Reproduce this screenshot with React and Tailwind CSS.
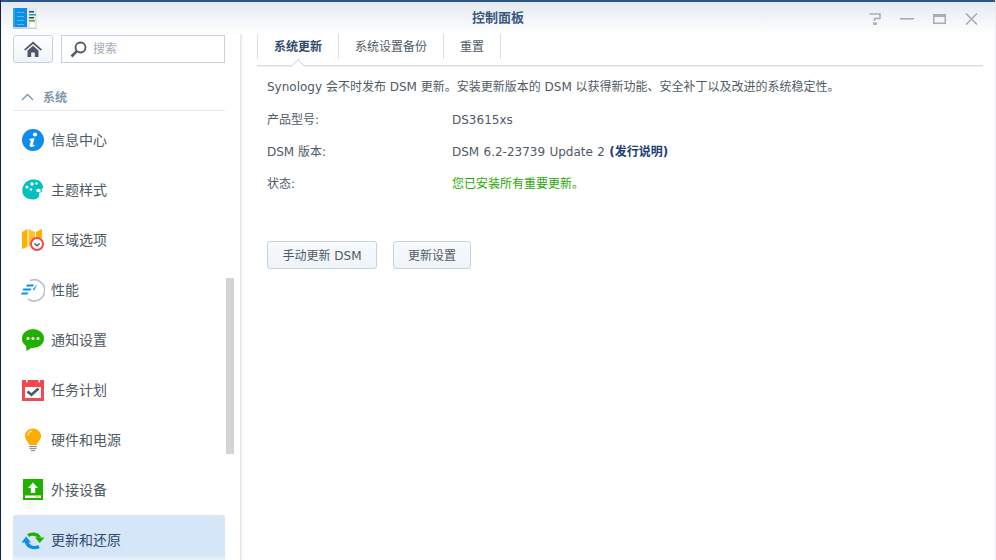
const font = { fontFamily: '"DejaVu Sans", "Noto Sans CJK SC", sans-serif' };

function InfoIcon() {
  return (
    <svg width="24" height="24" viewBox="0 0 24 24">
      <circle cx="12" cy="12" r="11" fill="#0b8de8" />
      <circle cx="14" cy="6.5" r="2.1" fill="#fff" />
      <path d="M8.5 11 L13.6 10 L11.6 17.4 L13.8 16.6 L13.5 18 Q10.5 19.4 9 18.6 Q8.3 18 8.8 16.4 L10 12.4 L8.4 12.2 Z" fill="#fff" />
    </svg>
  );
}

function ThemeIcon() {
  return (
    <svg width="24" height="24" viewBox="0 0 24 24">
      <path d="M11 1.5 C17 0.8 21 3.5 22 8 C22.6 10.5 20.8 11 19 11 C17 11 16.6 12.4 17.6 14 C18.8 16 18.6 19 16 20.4 C13 22 6 22 2.6 17.6 C-0.6 12 2.4 2.6 11 1.5 Z" fill="#00c0c0" />
      <ellipse cx="18" cy="12.5" rx="3" ry="2.2" fill="#00c0c0" />
      <ellipse cx="17.5" cy="12.5" rx="2.4" ry="1.7" fill="#fff" />
      <circle cx="11" cy="6" r="1.7" fill="#fff" />
      <circle cx="6" cy="9" r="1.6" fill="#fff" />
      <circle cx="15.5" cy="5.5" r="1.2" fill="#fff" />
      <circle cx="10" cy="11.5" r="1.2" fill="#fff" />
    </svg>
  );
}

function RegionIcon() {
  return (
    <svg width="24" height="24" viewBox="0 0 24 24">
      <path d="M1 4 L6.5 1 L6.5 19 L1 21 Z" fill="#ffb000" />
      <path d="M7.5 1 L14 4 L14 12 L7.5 19 Z" fill="#ffc233" />
      <path d="M15 4 L21 1 L21 10 L15 12 Z" fill="#ffb000" />
      <circle cx="16" cy="16" r="6" fill="#fff" stroke="#f2474d" strokeWidth="2" />
      <path d="M13.4 15.5 L16 17.8 L18.6 15.5" fill="none" stroke="#555e6b" strokeWidth="1.4" />
    </svg>
  );
}

function PerfIcon() {
  return (
    <svg width="24" height="24" viewBox="0 0 24 24">
      <path d="M9 2.6 A10.6 10.6 0 1 1 7 21" fill="none" stroke="#b9c2cd" strokeWidth="1.8" />
      <path d="M6 6.5 H13 L12 8.5 H5 Z M2.5 10.5 H10.5 L9.5 12.5 H1.5 Z M1 14.5 H7.5 L6.5 16.5 H0 Z" fill="#0b8de8" />
      <path d="M16.5 6 L13 12.5 L11.8 11.2 Z" fill="#0b8de8" />
    </svg>
  );
}

function NoticeIcon() {
  return (
    <svg width="24" height="24" viewBox="0 0 24 24">
      <ellipse cx="12" cy="10.5" rx="11" ry="9.5" fill="#20b100" />
      <path d="M5 17 L5.5 23 L12 19 Z" fill="#20b100" />
      <circle cx="7" cy="10.5" r="1.5" fill="#fff" />
      <circle cx="12" cy="10.5" r="1.5" fill="#fff" />
      <circle cx="17" cy="10.5" r="1.5" fill="#fff" />
    </svg>
  );
}

function TaskIcon() {
  return (
    <svg width="24" height="24" viewBox="0 0 24 24">
      <rect x="1" y="2" width="22" height="21" fill="#f5474f" />
      <rect x="4" y="9" width="16" height="11" fill="#fff" />
      <rect x="5" y="1" width="1.6" height="3.4" fill="#fff" />
      <rect x="17.4" y="1" width="1.6" height="3.4" fill="#fff" />
      <path d="M6.5 13.5 L10.5 16.8 L17.5 10.5" fill="none" stroke="#4f5867" strokeWidth="2.6" />
    </svg>
  );
}

function BulbIcon() {
  return (
    <svg width="24" height="24" viewBox="0 0 24 24">
      <path d="M12 0.5 C16.5 0.5 20 3.8 20 8 C20 12 16.6 13.5 15.8 17 H8.2 C7.4 13.5 4 12 4 8 C4 3.8 7.5 0.5 12 0.5 Z" fill="#ffac00" />
      <path d="M7 8 C7 5 9 3.2 11 3" fill="none" stroke="#ffd98a" strokeWidth="1.4" />
      <rect x="8" y="18" width="8" height="1.2" fill="#8d96a3" />
      <rect x="8.5" y="20" width="7" height="1.2" fill="#8d96a3" />
      <rect x="10" y="22" width="4" height="1.2" fill="#8d96a3" />
    </svg>
  );
}

function ExternalIcon() {
  return (
    <svg width="24" height="24" viewBox="0 0 24 24">
      <rect x="2" y="1" width="20" height="21" fill="#20b100" />
      <path d="M12 4.5 L17 10 H14.2 V15 H9.8 V10 H7 Z" fill="#fff" />
      <rect x="4" y="17.5" width="16" height="2.4" fill="#fff" />
      <rect x="15" y="18.2" width="2.5" height="1" fill="#ffac00" />
    </svg>
  );
}

function UpdateIcon() {
  return (
    <svg width="24" height="24" viewBox="0 0 24 24">
      <path d="M7 7.5 A8 7 0 0 1 18.6 9.5" fill="none" stroke="#20b100" strokeWidth="3.4" />
      <path d="M14 9.5 H23.5 L18.7 15 Z" fill="#20b100" />
      <path d="M5.5 13 C5.5 18 12 21.5 18 18.5" fill="none" stroke="#0b8de8" strokeWidth="3.4" />
      <path d="M0.5 14.5 H10 L5.2 8.5 Z" fill="#0b8de8" />
    </svg>
  );
}

function AppLogo() {
  return (
    <svg width="24" height="21" viewBox="0 0 24 21">
      <rect x="0" y="19" width="24" height="2" fill="#c9ced4" />
      <rect x="0" y="0" width="14" height="19" fill="#0b8de8" />
      <rect x="0" y="0" width="2" height="19" fill="#2aa8f5" />
      <rect x="4" y="4" width="7" height="1" fill="#4cbcff" />
      <rect x="4" y="8" width="7" height="1" fill="#4cbcff" />
      <rect x="4" y="12" width="7" height="1" fill="#4cbcff" />
      <rect x="4" y="16" width="7" height="1" fill="#4cbcff" />
      <rect x="14" y="0" width="10" height="20" fill="#e3e7ec" />
      <rect x="16" y="3" width="5" height="1.5" fill="#3e4a59" />
      <rect x="16" y="6" width="7" height="1.5" fill="#14a5d8" />
      <rect x="16" y="9" width="5" height="1.5" fill="#3e4a59" />
      <rect x="16" y="12" width="6" height="1.5" fill="#4caf20" />
      <circle cx="19.5" cy="17" r="2.5" fill="#fff" />
    </svg>
  );
}

const menu = [
  { name: "信息中心", icon: <InfoIcon /> },
  { name: "主题样式", icon: <ThemeIcon /> },
  { name: "区域选项", icon: <RegionIcon /> },
  { name: "性能", icon: <PerfIcon /> },
  { name: "通知设置", icon: <NoticeIcon /> },
  { name: "任务计划", icon: <TaskIcon /> },
  { name: "硬件和电源", icon: <BulbIcon /> },
  { name: "外接设备", icon: <ExternalIcon /> },
  { name: "更新和还原", icon: <UpdateIcon />, active: true },
];

function Sidebar() {
  return (
    <div className="relative w-[240px] shrink-0 h-[526px] overflow-hidden border-r border-[#e3e4e6] shadow-[1px_0_2px_rgba(0,0,0,0.08)]">
      <div className="flex gap-[8px] pl-[12px] pt-[1px]">
        <button className="w-[40px] h-[28px] flex items-center justify-center rounded-[3px] border border-[#c6d2de] bg-gradient-to-b from-white to-[#eff4f9]">
          <svg width="18" height="16" viewBox="0 0 18 16">
            <path d="M9 0.5 L18 8.5 L16.6 9.6 L9 3 L1.4 9.6 L0 8.5 Z M3.5 9.5 L9 4.8 L14.5 9.5 V16 H10.8 V11.5 H7.2 V16 H3.5 Z" fill="#4f5867" />
          </svg>
        </button>
        <div className="w-[164px] h-[28px] flex items-center border border-[#c6d2de] bg-white pl-[8px]">
          <svg width="17" height="17" viewBox="0 0 17 17">
            <circle cx="10.5" cy="6.5" r="5" fill="none" stroke="#4f5867" strokeWidth="1.8" />
            <path d="M6.8 10.2 L1.5 15.5" stroke="#4f5867" strokeWidth="2.6" />
          </svg>
          <span className="ml-[6px] text-[12px] text-[#a4aab2]">搜索</span>
        </div>
      </div>
      <div className="ml-[12px] mt-[21px] w-[212px] h-[27px] flex items-center border-b border-[#e6ebf0]">
        <svg className="ml-[8px]" width="13" height="8" viewBox="0 0 13 8">
          <path d="M1 7 L6.5 1.5 L12 7" fill="none" stroke="#7e97ae" strokeWidth="1.4" />
        </svg>
        <span className="ml-[9px] mt-[1px] text-[12px] font-bold text-[#7d96ad]">系统</span>
      </div>
      <div className="ml-[12px] mt-[4px] w-[212px]">
        {menu.map((item) => (
          <div
            key={item.name}
            className={`h-[50px] flex items-center pl-[8px] rounded-[3px] ${item.active ? "bg-gradient-to-b from-[#d5e6f8] from-[80%] to-white text-[#2f4a6e]" : "text-[#505a64]"}`}
          >
            <span className="w-[24px] h-[24px] shrink-0 flex items-center justify-center">{item.icon}</span>
            <span className="ml-[6px] text-[14px] leading-[20px]">{item.name}</span>
          </div>
        ))}
      </div>
      {/* scrollbar */}
      <div className="absolute left-[225px] top-[244px] w-[8px] h-[176px] bg-[#d3d4d6]" />
    </div>
  );
}

function Tabs() {
  const tabs = ["系统更新", "系统设置备份", "重置"];
  return (
    <div className="relative ml-[16px] mr-[13px] h-[25px] flex border-b border-[#d8dbdf] shadow-[0_1px_1px_rgba(0,0,0,0.05)] box-content pb-[6px]">
      <div className="flex border-l border-[#d7e0e9] h-[25px]">
        {tabs.map((t, i) => (
          <div
            key={t}
            className={`h-[25px] flex items-center px-[16px] text-[12px] border-r border-[#d7e0e9] ${i === 0 ? "font-bold text-[#2f4a6e]" : "text-[#505a64]"}`}
          >
            {t}
          </div>
        ))}
      </div>
      {/* active tab notch */}
      <div className="absolute left-[36px] top-[27px] w-[10px] h-[10px] rotate-45 bg-white border-l border-t border-[#d8dbdf]" />
    </div>
  );
}

function Row({ label, children }) {
  return (
    <div className="flex h-[32px] items-center text-[12px] text-[#505a64]">
      <div className="w-[185px]">{label}</div>
      <div>{children}</div>
    </div>
  );
}

function Content() {
  return (
    <div className="flex-1 min-w-0 relative">
      <Tabs />
      <div className="pl-[26px] text-[12px] text-[#505a64]">
        <div className="h-[30px] mt-[6px] flex items-center">
          Synology 会不时发布 DSM 更新。安装更新版本的 DSM 以获得新功能、安全补丁以及改进的系统稳定性。
        </div>
        <div className="mt-[2px]">
          <Row label="产品型号:">DS3615xs</Row>
          <Row label="DSM 版本:">
            <span className="[word-spacing:0.5px]">DSM 6.2-23739 Update 2 </span>
            <span className="font-bold text-[#1e3f73]">(发行说明)</span>
          </Row>
          <Row label="状态:">
            <span className="text-[#28a900]">您已安装所有重要更新。</span>
          </Row>
        </div>
        <div className="flex gap-[16px] mt-[41px]">
          <button className="h-[28px] w-[110px] pt-[1px] rounded-[3px] border border-[#c6d2de] bg-gradient-to-b from-[#f8fafc] to-[#eff4f9] text-[12px] text-[#505a64]">
            手动更新 DSM
          </button>
          <button className="h-[28px] w-[78px] pt-[1px] rounded-[3px] border border-[#c6d2de] bg-gradient-to-b from-[#f8fafc] to-[#eff4f9] text-[12px] text-[#505a64]">
            更新设置
          </button>
        </div>
      </div>
    </div>
  );
}

export default function App() {
  return (
    <div className="w-[996px] h-[560px] overflow-hidden bg-white relative" style={font}>
      <div className="h-[2px] bg-[#2a5788]" />
      <div className="h-[32px] relative flex items-center justify-center bg-gradient-to-b from-[#e5eaf1] to-white">
        <div className="absolute left-[13px] top-[6px]">
          <AppLogo />
        </div>
        <span className="text-[13px] font-bold text-[#3b5a80] -mt-[1px]">控制面板</span>
        <div className="absolute right-[18px] top-[11px] flex items-center gap-[19px]">
          <svg width="12" height="12" viewBox="0 0 12 12">
            <path d="M0.5 1 H11 V5.5 H5.5 V8 M5 10 H7 V12 H5 Z" fill="none" stroke="#a9adb2" strokeWidth="1.5" />
          </svg>
          <svg width="14" height="12" viewBox="0 0 14 12">
            <rect x="0" y="5" width="14" height="1.6" fill="#a9adb2" />
          </svg>
          <svg width="13" height="12" viewBox="0 0 13 12">
            <path d="M0 1 H13 V11 H0 Z M1.5 4 V9.5 H11.5 V4 Z" fill="#a9adb2" fillRule="evenodd" />
          </svg>
          <svg width="13" height="12" viewBox="0 0 13 12">
            <path d="M1 0.5 L12 11.5 M12 0.5 L1 11.5" stroke="#a9adb2" strokeWidth="1.6" />
          </svg>
        </div>
      </div>
      <div className="flex pl-[1px]">
        <Sidebar />
        <Content />
      </div>
      {/* window edge */}
      <div className="absolute left-0 top-0 w-[1px] h-full bg-[#0b2545]" />
      <div className="absolute right-0 top-0 w-[1px] h-full bg-[#e8eaec]" />
    </div>
  );
}
